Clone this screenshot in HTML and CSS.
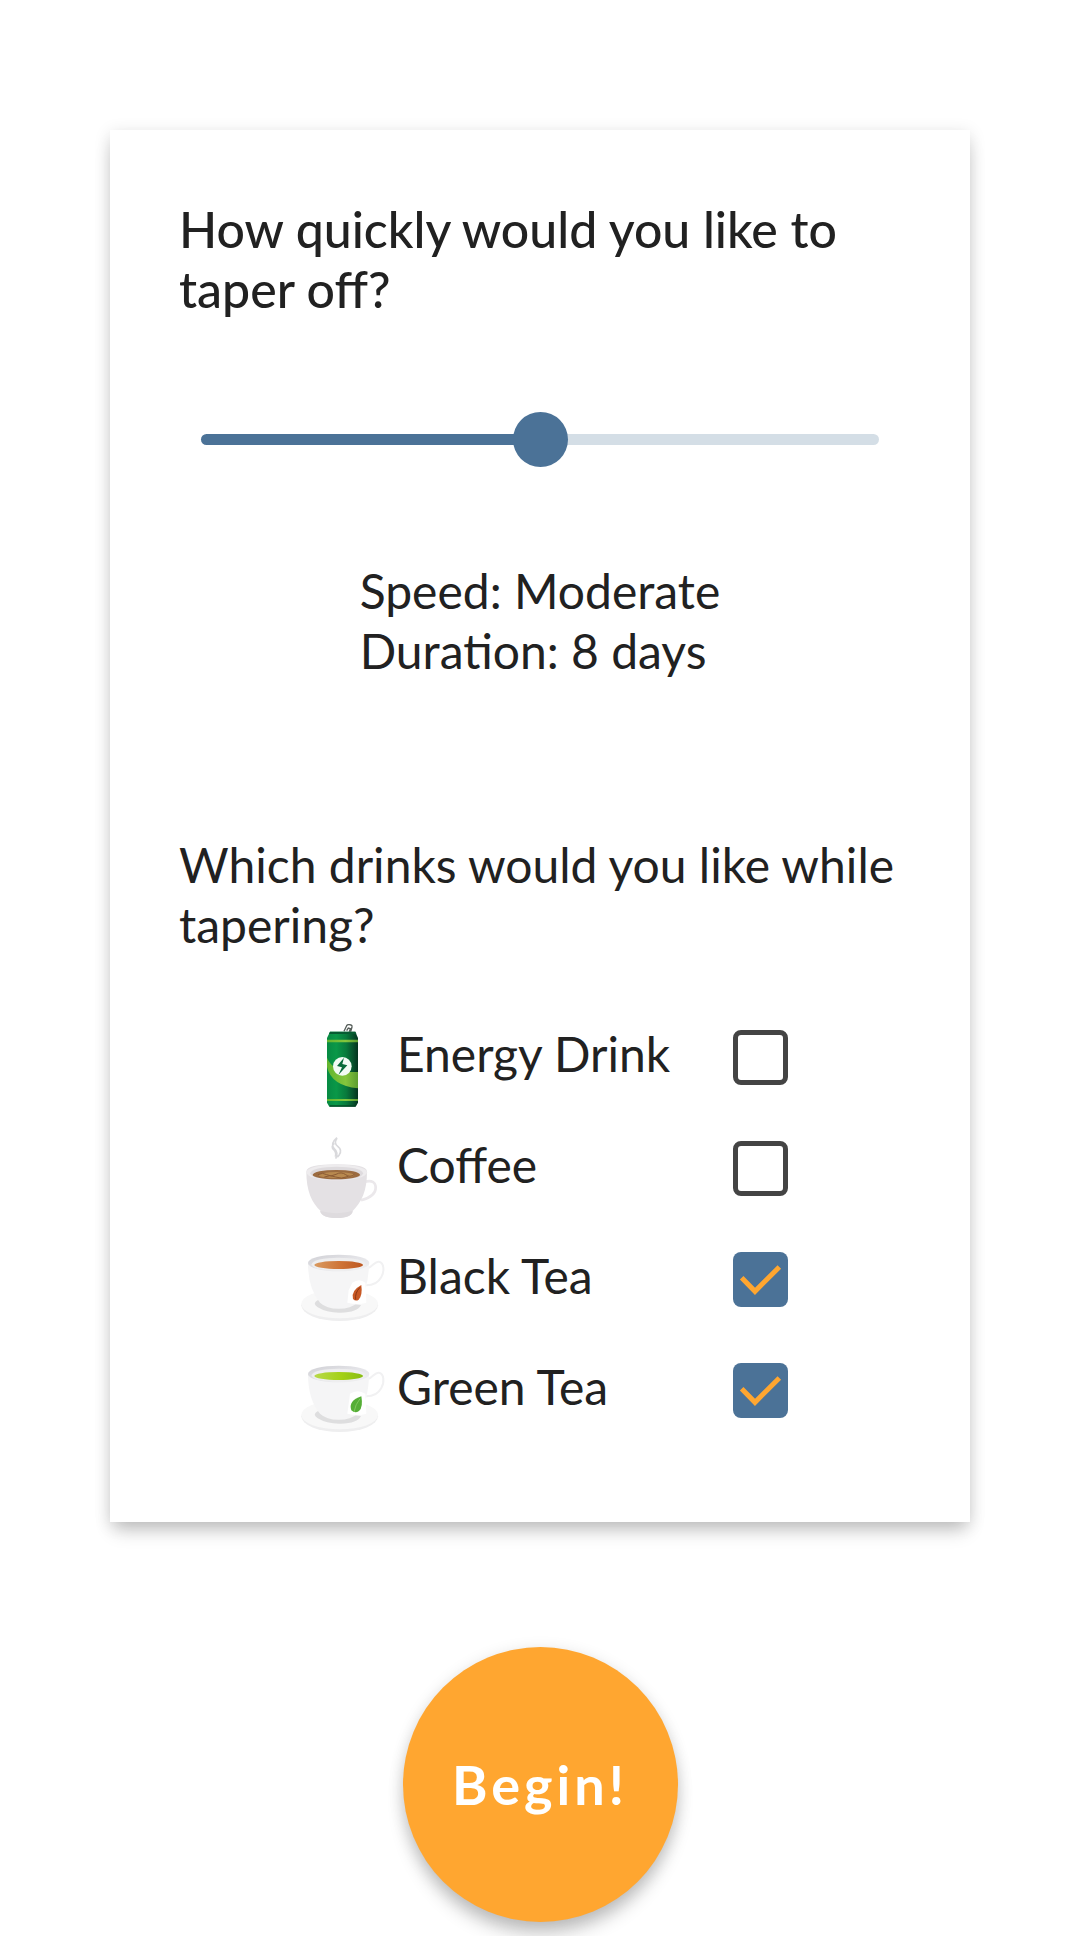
FILE: index.html
```html
<!DOCTYPE html>
<html lang="en">
<head>
<meta charset="utf-8">
<meta name="viewport" content="width=device-width, initial-scale=1">
<title>Taper plan</title>
<link rel="stylesheet" href="styles.css">
</head>
<body>
<form class="plan">
  <main class="card">
    <h1 class="question question-strong"><label for="speed">How quickly would you like to taper off?</label></h1>
    <input class="slider" id="speed" type="range" min="0" max="2" value="1">
    <p class="summary">Speed: Moderate<br>Duration: 8 days</p>
    <h2 class="question">Which drinks would you like while tapering?</h2>
    <ul class="drinks">
      <li class="drink">
        <svg class="drink-icon" viewBox="6 -24 315 333" aria-hidden="true">
          <defs>
            <linearGradient id="can"><stop offset="0" stop-color="#078a43"/><stop offset=".3" stop-color="#0a9848"/><stop offset=".62" stop-color="#087a3c"/><stop offset=".85" stop-color="#07502c"/><stop offset="1" stop-color="#04331f"/></linearGradient>
            <linearGradient id="band"><stop offset="0" stop-color="#62b52f"/><stop offset=".6" stop-color="#84c63d"/><stop offset="1" stop-color="#5d9d31"/></linearGradient>
          </defs>
          <path d="M162 64l8-17q2-4 8-3l5 1q4 1 3 6l-4 14M170 62l5-8 6 2-3 9" fill="none" stroke="#555d59" stroke-width="4"/>
          <path d="M120 65h76l8 19v194l-7 12h-79l-7-12V84z" fill="url(#can)"/>
          <path d="M120 65h76l3 7h-82z" fill="#075b32"/>
          <path d="M111 89h93v8h-93zM111 267h93v6h-93z" fill="url(#band)"/>
          <path d="M111 143q18 46 93 43v49q-80-8-93-64z" fill="url(#band)"/>
          <circle cx="157" cy="169" r="28" fill="#f2fbf5"/>
          <path d="M162 143l-21 25 15 4-11 23 27-29-15-4z" fill="#096b3b"/>
          <path d="M119 286h77v4h-77z" fill="#064326"/>
        </svg>
        <label class="drink-name" for="energy">Energy Drink</label>
        <input class="check" id="energy" type="checkbox">
      </li>
      <li class="drink">
        <svg class="drink-icon" viewBox="6 -21 315 333" aria-hidden="true">
          <path d="M141 53q-21 18-9 32 14 12 5 31M133 70q-12 10-1 20 8 9 4 20M141 55q-11 15 3 25 13 10 4 24l-6 8" fill="none" stroke="#d9d9dc" stroke-width="5"/>
          <path d="M222 186q35-10 35 18 0 25-44 37" fill="none" stroke="#ebe8eb" stroke-width="8"/>
          <path d="M49 155q1-22 91-22t91 22c0 57-16 91-43 118q-3 21-48 21t-48-21C65 248 49 212 49 155z" fill="#e4e1e4"/>
          <ellipse cx="140" cy="157" rx="91" ry="24" fill="#eeecee"/>
          <ellipse cx="140" cy="160" rx="79" ry="20" fill="#dedbde"/>
          <ellipse cx="139" cy="164" rx="71" ry="14" fill="#9b6b40"/>
          <ellipse cx="139" cy="165" rx="53" ry="9" fill="#b8894f"/>
          <path d="M84 164q14-8 26 0t28-1 29 1 26-1M103 171q18-8 34 0t38-2" fill="none" stroke="#8b5b35" stroke-width="3"/>
          <path d="M90 273q49 13 98 0-3 21-48 21t-50-21z" fill="#dedbde"/>
        </svg>
        <label class="drink-name" for="coffee">Coffee</label>
        <input class="check" id="coffee" type="checkbox">
      </li>
      <li class="drink">
        <svg class="drink-icon" viewBox="6 -33 315 333" aria-hidden="true">
          <defs>
            <linearGradient id="black-tea"><stop offset="0" stop-color="#d99a60"/><stop offset=".55" stop-color="#ce7336"/><stop offset="1" stop-color="#bd5720"/></linearGradient>
            <linearGradient id="tea-rim" y2="1"><stop offset="0" stop-color="#cfcfd4"/><stop offset=".5" stop-color="#e4e4e8"/><stop offset="1" stop-color="#f1f1f2"/></linearGradient>
          </defs>
          <ellipse cx="149" cy="211" rx="115" ry="47" fill="#eeeeef"/>
          <ellipse cx="149" cy="207" rx="115" ry="43" fill="#f8f8f8"/>
          <path d="M84 195q-19 10-1 22 28 17 69 16 51-1 61-23z" fill="#dededf"/>
          <path d="M234 99c14-3 20-21 33-19 15 2 17 29 7 46-8 15-25 25-45 25" fill="none" stroke="#f1f1f2" stroke-width="6"/>
          <path d="M54 84q0 77 36 119 19 18 56 18t57-18q34-42 34-119z" fill="#f5f5f6"/>
          <ellipse cx="146" cy="84" rx="92" ry="25" fill="url(#tea-rim)"/>
          <ellipse cx="146" cy="88" rx="81" ry="20" fill="#eeeeef"/>
          <ellipse cx="146" cy="90" rx="73" ry="12" fill="url(#black-tea)"/>
          <path d="M187 143q21-15 39 0l3 60q-26 8-57 0l4-37z" fill="#fff"/>
          <path d="M214 150q4 32-8 44-9 6-17-2-7-25 25-42z" fill="#c85824"/>
          <path d="M210 157q-16 17-13 37" fill="none" stroke="#8d3513" stroke-width="3"/>
        </svg>
        <label class="drink-name" for="black">Black Tea</label>
        <input class="check" id="black" type="checkbox" checked>
      </li>
      <li class="drink">
        <svg class="drink-icon" viewBox="6 -30 315 333" aria-hidden="true">
          <defs>
            <linearGradient id="green-tea"><stop offset="0" stop-color="#b8d94a"/><stop offset=".55" stop-color="#a4d116"/><stop offset="1" stop-color="#88bd12"/></linearGradient>
          </defs>
          <ellipse cx="149" cy="214" rx="115" ry="47" fill="#eeeeef"/>
          <ellipse cx="149" cy="210" rx="115" ry="43" fill="#f8f8f8"/>
          <path d="M84 198q-19 10-1 22 28 17 69 16 51-1 61-23z" fill="#dededf"/>
          <path d="M234 102c14-3 20-21 33-19 15 2 17 29 7 46-8 15-25 25-45 25" fill="none" stroke="#f1f1f2" stroke-width="6"/>
          <path d="M54 87q0 77 36 119 19 18 56 18t57-18q34-42 34-119z" fill="#f5f5f6"/>
          <ellipse cx="146" cy="87" rx="92" ry="25" fill="url(#tea-rim)"/>
          <ellipse cx="146" cy="91" rx="81" ry="20" fill="#eeeeef"/>
          <ellipse cx="146" cy="93" rx="73" ry="12" fill="url(#green-tea)"/>
          <path d="M180 146q23-15 46 0l3 60q-26 8-57 0z" fill="#fff"/>
          <path d="M214 154q6 33-7 44-12 9-23-2-10-29 30-42z" fill="#55ae36"/>
          <path d="M210 161q-14 17-18 40" fill="none" stroke="#80c85f" stroke-width="3"/>
        </svg>
        <label class="drink-name" for="green">Green Tea</label>
        <input class="check" id="green" type="checkbox" checked>
      </li>
    </ul>
  </main>
  <button class="begin" type="button">Begin!</button>
</form>
</body>
</html>
```
FILE: styles.css
```css
* {
  box-sizing: border-box;
}

body {
  margin: 0;
  background: #fff;
  color: #212121;
  font-family: Lato, "Open Sans", sans-serif;
  font-size: 48px;
  line-height: 60px;
}

.plan {
  display: flex;
  flex-direction: column;
  align-items: center;
  padding: 130px 110px 14px;
}

.card {
  display: flex;
  flex-direction: column;
  align-self: stretch;
  padding: 69px 69px 76px;
  background: #fff;
  box-shadow: 0 12px 18px -4px rgba(0, 0, 0, .2), 0 3px 16px rgba(0, 0, 0, .12);
}

.question {
  margin: 0;
  font-size: inherit;
  font-weight: 400;
}

.question-strong {
  font-size: 50px;
  font-weight: 500;
}

.slider {
  appearance: none;
  height: 56px;
  margin: 92px 22px 94px;
  background: none;
}

.slider::-webkit-slider-runnable-track {
  height: 11px;
  border-radius: 6px;
  background: linear-gradient(to right, #4b7297 50%, #d4dee6 50%);
}

.slider::-webkit-slider-thumb {
  appearance: none;
  width: 55px;
  height: 55px;
  margin-top: -22px;
  border-radius: 50%;
  background: #4b7297;
}

.summary {
  align-self: center;
  margin: 0 0 154px;
}

.drinks {
  display: flex;
  flex-direction: column;
  align-self: center;
  margin: 47px 0 0;
  padding: 0;
  list-style: none;
}

.drink {
  display: grid;
  grid-template-columns: 105px 336px 55px;
  align-items: center;
}

.drink-icon {
  display: block;
  width: 105px;
  height: 111px;
}

.drink-name {
  padding-bottom: 8px;
}

.check {
  appearance: none;
  width: 55px;
  height: 55px;
  margin: 0;
  border: 5px solid #444;
  border-radius: 8px;
}

.check:checked {
  border: 0;
  background: #4b7297 url("data:image/svg+xml,%3Csvg xmlns='http://www.w3.org/2000/svg' viewBox='0 0 165 165'%3E%3Cpath d='M26 77l40 41 73-73' fill='none' stroke='%23ffa630' stroke-width='15'/%3E%3C/svg%3E") center / 100%;
}

.begin {
  width: 275px;
  height: 275px;
  margin-top: 125px;
  padding: 0;
  border: 0;
  border-radius: 50%;
  background: #ffa630;
  box-shadow: 0 14px 18px -2px rgba(0, 0, 0, .2), 0 3px 16px rgba(0, 0, 0, .12);
  color: #fff;
  font: 700 54px/60px Lato, "Open Sans", sans-serif;
  letter-spacing: 4px;
}
```
